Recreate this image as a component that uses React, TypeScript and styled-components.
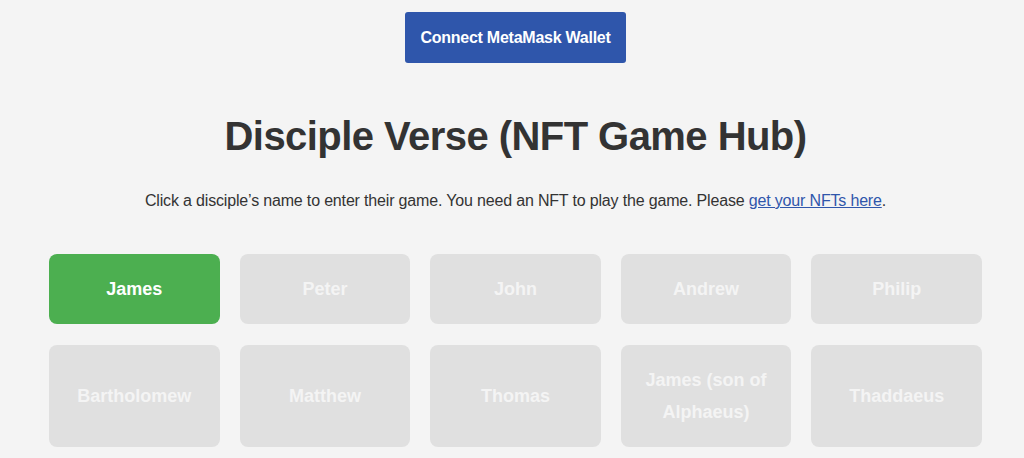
import React from "react";
import styled, { createGlobalStyle } from "styled-components";

const GlobalStyle = createGlobalStyle`
  body {
    margin: 0;
    background-color: #f4f4f4;
    font-family: "Liberation Sans", Arial, sans-serif;
    color: #333;
  }
`;

const Page = styled.div`
  display: flex;
  flex-direction: column;
  align-items: center;
  padding: 12px 42px 0 49px;
`;

const ConnectButton = styled.button`
  height: 51px;
  padding: 0 15px;
  border: none;
  border-radius: 3px;
  background-color: #2f56ab;
  color: #fff;
  font-family: inherit;
  font-size: 16px;
  font-weight: 700;
  letter-spacing: -0.25px;
  cursor: pointer;
`;

const Title = styled.h1`
  margin: 50px 0 0;
  font-size: 40px;
  line-height: 46px;
  font-weight: 700;
  letter-spacing: -0.55px;
  color: #333;
`;

const Intro = styled.p`
  margin: 32px 0 0;
  font-size: 16px;
  line-height: 20px;
  letter-spacing: -0.17px;

  a {
    color: #2f56ab;
  }
`;

const Grid = styled.div`
  display: grid;
  grid-template-columns: repeat(5, 1fr);
  gap: 21px 20px;
  width: 100%;
  margin-top: 43px;
`;

const Disciple = styled.button<{ $active?: boolean }>`
  display: flex;
  align-items: center;
  justify-content: center;
  padding: 19px 14px;
  border: none;
  border-radius: 8px;
  background-color: ${(p) => (p.$active ? "#4caf50" : "#e0e0e0")};
  color: ${(p) => (p.$active ? "#fff" : "#f4f4f4")};
  font-family: inherit;
  font-size: 18px;
  font-weight: 700;
  line-height: 32px;
  text-align: center;
  cursor: ${(p) => (p.$active ? "pointer" : "not-allowed")};
`;

const disciples = [
  "James",
  "Peter",
  "John",
  "Andrew",
  "Philip",
  "Bartholomew",
  "Matthew",
  "Thomas",
  "James (son of Alphaeus)",
  "Thaddaeus",
];

const App = () => {
  return (
    <>
      <GlobalStyle />
      <Page>
        <ConnectButton>Connect MetaMask Wallet</ConnectButton>
        <Title>Disciple Verse (NFT Game Hub)</Title>
        <Intro>
          Click a disciple’s name to enter their game. You need an NFT to play
          the game. Please <a href="#">get your NFTs here</a>.
        </Intro>
        <Grid>
          {disciples.map((name, i) => (
            <Disciple key={name} $active={i === 0}>
              {name}
            </Disciple>
          ))}
        </Grid>
      </Page>
    </>
  );
};

export default App;
